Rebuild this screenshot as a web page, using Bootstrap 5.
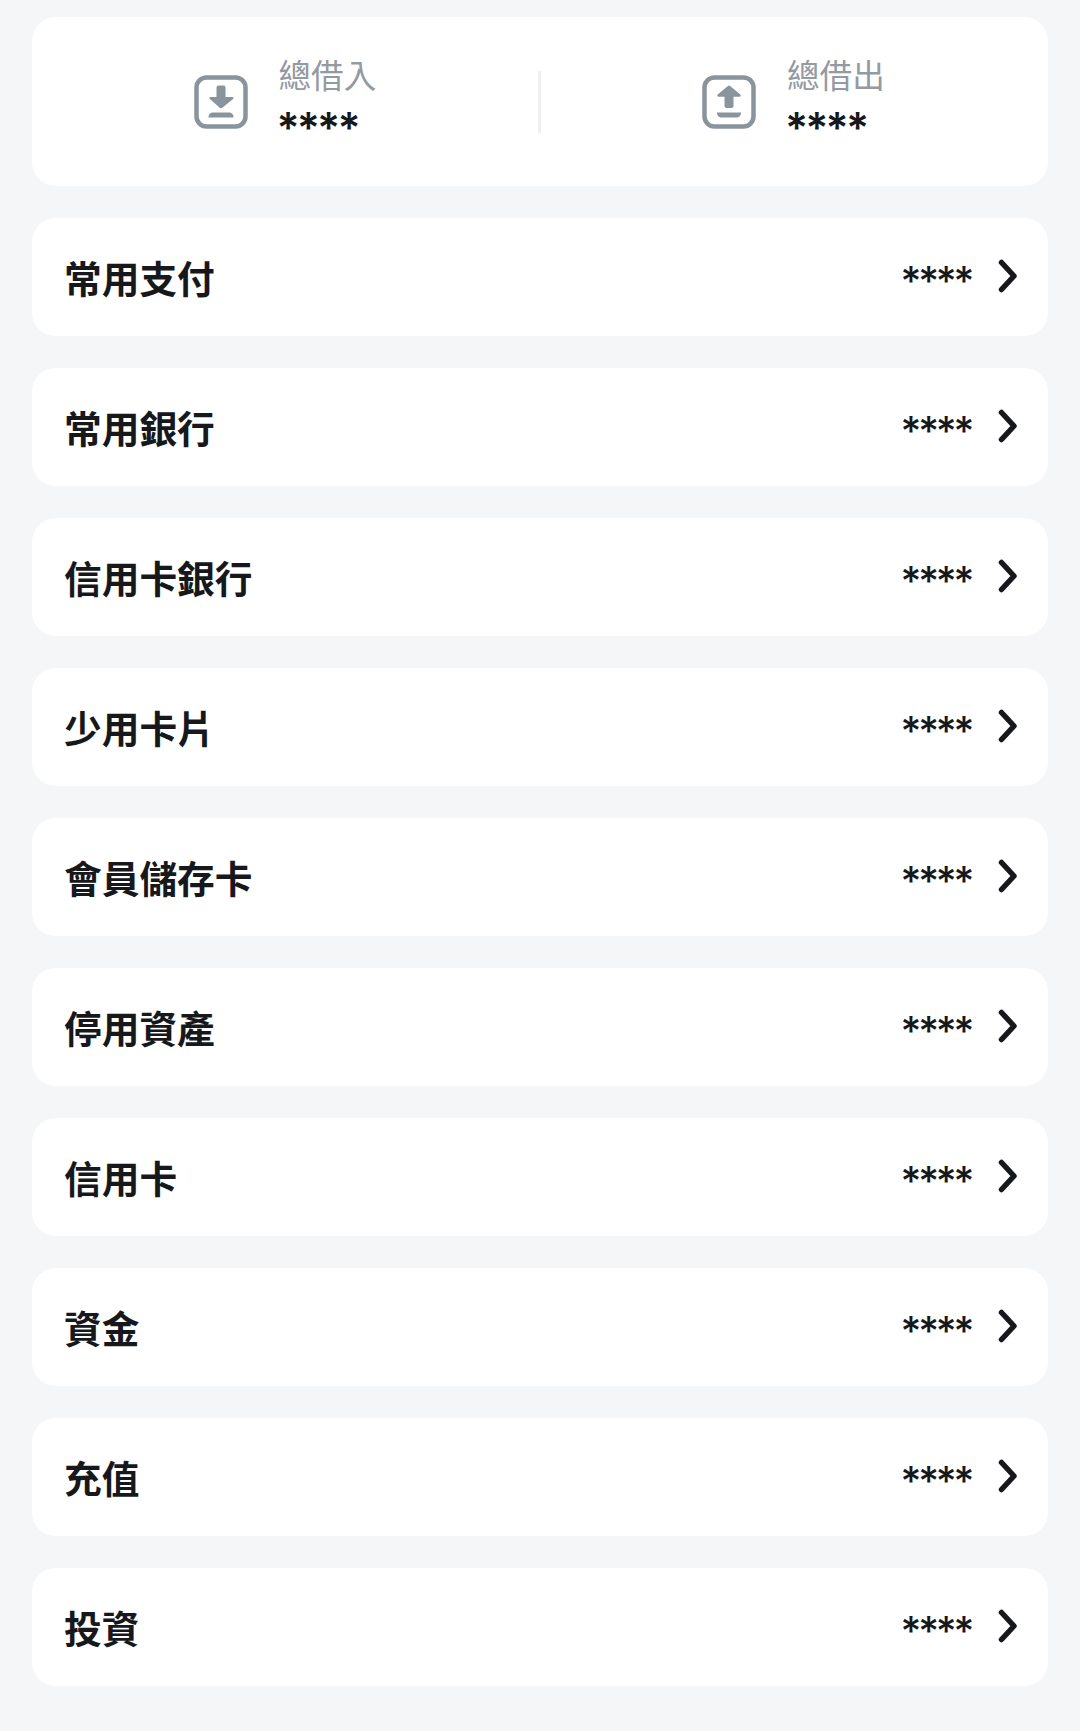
<!DOCTYPE html>
<html lang="zh-Hant">
<head>
<meta charset="utf-8">
<title>資產</title>
<link href="https://cdn.jsdelivr.net/npm/bootstrap@5.3.0/dist/css/bootstrap.min.css" rel="stylesheet">
<style>
html, body { background: #f4f6f8; }
body { font-family: "Inter", "Noto Sans CJK TC", sans-serif; color: #16181c; }
.page-wrap { padding: 17px 32px 0; display: flex; flex-direction: column; gap: 32px; }
.sheet { background: #fff; border-radius: 24px; border: 0; }
.summary { height: 169px; }
.summary-cell { flex: 1 1 0; display: flex; align-items: center; justify-content: center; gap: 31px; }
.summary-cell:first-child { flex: 0 0 506px; }
.summary-divider { width: 3px; height: 62px; background: #eef0f2; flex: none; margin: 0 -1.5px 0 -.5px; }
.summary-text { width: 98px; margin-top: -6px; }
.summary-label { font-size: 32.6px; line-height: 48px; margin-bottom: 6px; color: #939aa2; font-family: "Noto Sans CJK TC", sans-serif; font-weight: 400; white-space: nowrap; }
.summary-value { font-size: 43px; letter-spacing: -2.9px; line-height: 44px; font-weight: 600; height: 44px; margin-left: -2px; padding-top: 1px; }
.asset-row { height: 118px; display: flex; align-items: center; padding: 0 30px 0 32px; }
.asset-name { font-size: 37.7px; font-weight: 700; font-family: "Noto Sans CJK TC", sans-serif; line-height: 1; }
.asset-value { font-size: 40px; letter-spacing: -3.2px; font-weight: 500; line-height: 1; margin-right: 27px; padding-top: 8px; }
.chev { flex: none; margin-bottom: 2px; }
.tile { flex: none; }
</style>
</head>
<body>
<div class="page-wrap">
  <div class="sheet summary d-flex align-items-center">
    <div class="summary-cell">
      <svg class="tile" width="54" height="54" viewBox="0 0 54 54" aria-hidden="true">
        <rect x="2.500" y="2.500" width="49" height="49" rx="10" fill="none" stroke="#8a949d" stroke-width="4.500"/>
        <path d="M22.500 12.500a2 2 0 0 1 2-2h5a2 2 0 0 1 2 2v9.500h6.800c1.200 0 1.700 1.400.8 2.100L28.300 32.700a2 2 0 0 1-2.600 0L15.900 24.100c-.9-.7-.4-2.100.8-2.100h5.800z" fill="#8a949d"/>
        <path d="M14.500 42.500c0-3.500 2-5 4.500-5h16c2.500 0 4.500 1.500 4.500 5z" fill="#8a949d"/>
      </svg>
      <div class="summary-text">
        <div class="summary-label">總借入</div>
        <div class="summary-value">****</div>
      </div>
    </div>
    <div class="summary-divider"></div>
    <div class="summary-cell">
      <svg class="tile" width="54" height="54" viewBox="0 0 54 54" aria-hidden="true">
        <rect x="2.500" y="2.500" width="49" height="49" rx="10" fill="none" stroke="#8a949d" stroke-width="4.500"/>
        <path d="M25.600 11.200a2 2 0 0 1 2.800 0l9.900 8.400c.9.800.4 2.200-.8 2.200h-6v9.200a2 2 0 0 1-2 2h-5a2 2 0 0 1-2-2v-9.200h-6c-1.200 0-1.700-1.400-.8-2.200z" fill="#8a949d"/>
        <path d="M15 37.500h24c0 3.500-2 5-4.500 5h-15c-2.500 0-4.500-1.500-4.500-5z" fill="#8a949d"/>
      </svg>
      <div class="summary-text">
        <div class="summary-label">總借出</div>
        <div class="summary-value">****</div>
      </div>
    </div>
  </div>
  <div class="sheet asset-row"><span class="asset-name">常用支付</span><span class="asset-value ms-auto">****</span><svg class="chev" width="20" height="34" viewBox="0 0 20 34" aria-hidden="true"><path d="M3.500 3.500 16 17 3.500 30.500" fill="none" stroke="#16181c" stroke-width="5.500" stroke-linecap="round" stroke-linejoin="round"/></svg></div>
  <div class="sheet asset-row"><span class="asset-name">常用銀行</span><span class="asset-value ms-auto">****</span><svg class="chev" width="20" height="34" viewBox="0 0 20 34" aria-hidden="true"><path d="M3.500 3.500 16 17 3.500 30.500" fill="none" stroke="#16181c" stroke-width="5.500" stroke-linecap="round" stroke-linejoin="round"/></svg></div>
  <div class="sheet asset-row"><span class="asset-name">信用卡銀行</span><span class="asset-value ms-auto">****</span><svg class="chev" width="20" height="34" viewBox="0 0 20 34" aria-hidden="true"><path d="M3.500 3.500 16 17 3.500 30.500" fill="none" stroke="#16181c" stroke-width="5.500" stroke-linecap="round" stroke-linejoin="round"/></svg></div>
  <div class="sheet asset-row"><span class="asset-name">少用卡片</span><span class="asset-value ms-auto">****</span><svg class="chev" width="20" height="34" viewBox="0 0 20 34" aria-hidden="true"><path d="M3.500 3.500 16 17 3.500 30.500" fill="none" stroke="#16181c" stroke-width="5.500" stroke-linecap="round" stroke-linejoin="round"/></svg></div>
  <div class="sheet asset-row"><span class="asset-name">會員儲存卡</span><span class="asset-value ms-auto">****</span><svg class="chev" width="20" height="34" viewBox="0 0 20 34" aria-hidden="true"><path d="M3.500 3.500 16 17 3.500 30.500" fill="none" stroke="#16181c" stroke-width="5.500" stroke-linecap="round" stroke-linejoin="round"/></svg></div>
  <div class="sheet asset-row"><span class="asset-name">停用資產</span><span class="asset-value ms-auto">****</span><svg class="chev" width="20" height="34" viewBox="0 0 20 34" aria-hidden="true"><path d="M3.500 3.500 16 17 3.500 30.500" fill="none" stroke="#16181c" stroke-width="5.500" stroke-linecap="round" stroke-linejoin="round"/></svg></div>
  <div class="sheet asset-row"><span class="asset-name">信用卡</span><span class="asset-value ms-auto">****</span><svg class="chev" width="20" height="34" viewBox="0 0 20 34" aria-hidden="true"><path d="M3.500 3.500 16 17 3.500 30.500" fill="none" stroke="#16181c" stroke-width="5.500" stroke-linecap="round" stroke-linejoin="round"/></svg></div>
  <div class="sheet asset-row"><span class="asset-name">資金</span><span class="asset-value ms-auto">****</span><svg class="chev" width="20" height="34" viewBox="0 0 20 34" aria-hidden="true"><path d="M3.500 3.500 16 17 3.500 30.500" fill="none" stroke="#16181c" stroke-width="5.500" stroke-linecap="round" stroke-linejoin="round"/></svg></div>
  <div class="sheet asset-row"><span class="asset-name">充值</span><span class="asset-value ms-auto">****</span><svg class="chev" width="20" height="34" viewBox="0 0 20 34" aria-hidden="true"><path d="M3.500 3.500 16 17 3.500 30.500" fill="none" stroke="#16181c" stroke-width="5.500" stroke-linecap="round" stroke-linejoin="round"/></svg></div>
  <div class="sheet asset-row"><span class="asset-name">投資</span><span class="asset-value ms-auto">****</span><svg class="chev" width="20" height="34" viewBox="0 0 20 34" aria-hidden="true"><path d="M3.500 3.500 16 17 3.500 30.500" fill="none" stroke="#16181c" stroke-width="5.500" stroke-linecap="round" stroke-linejoin="round"/></svg></div>
</div>
<script src="https://cdn.jsdelivr.net/npm/bootstrap@5.3.0/dist/js/bootstrap.bundle.min.js"></script>
</body>
</html>
